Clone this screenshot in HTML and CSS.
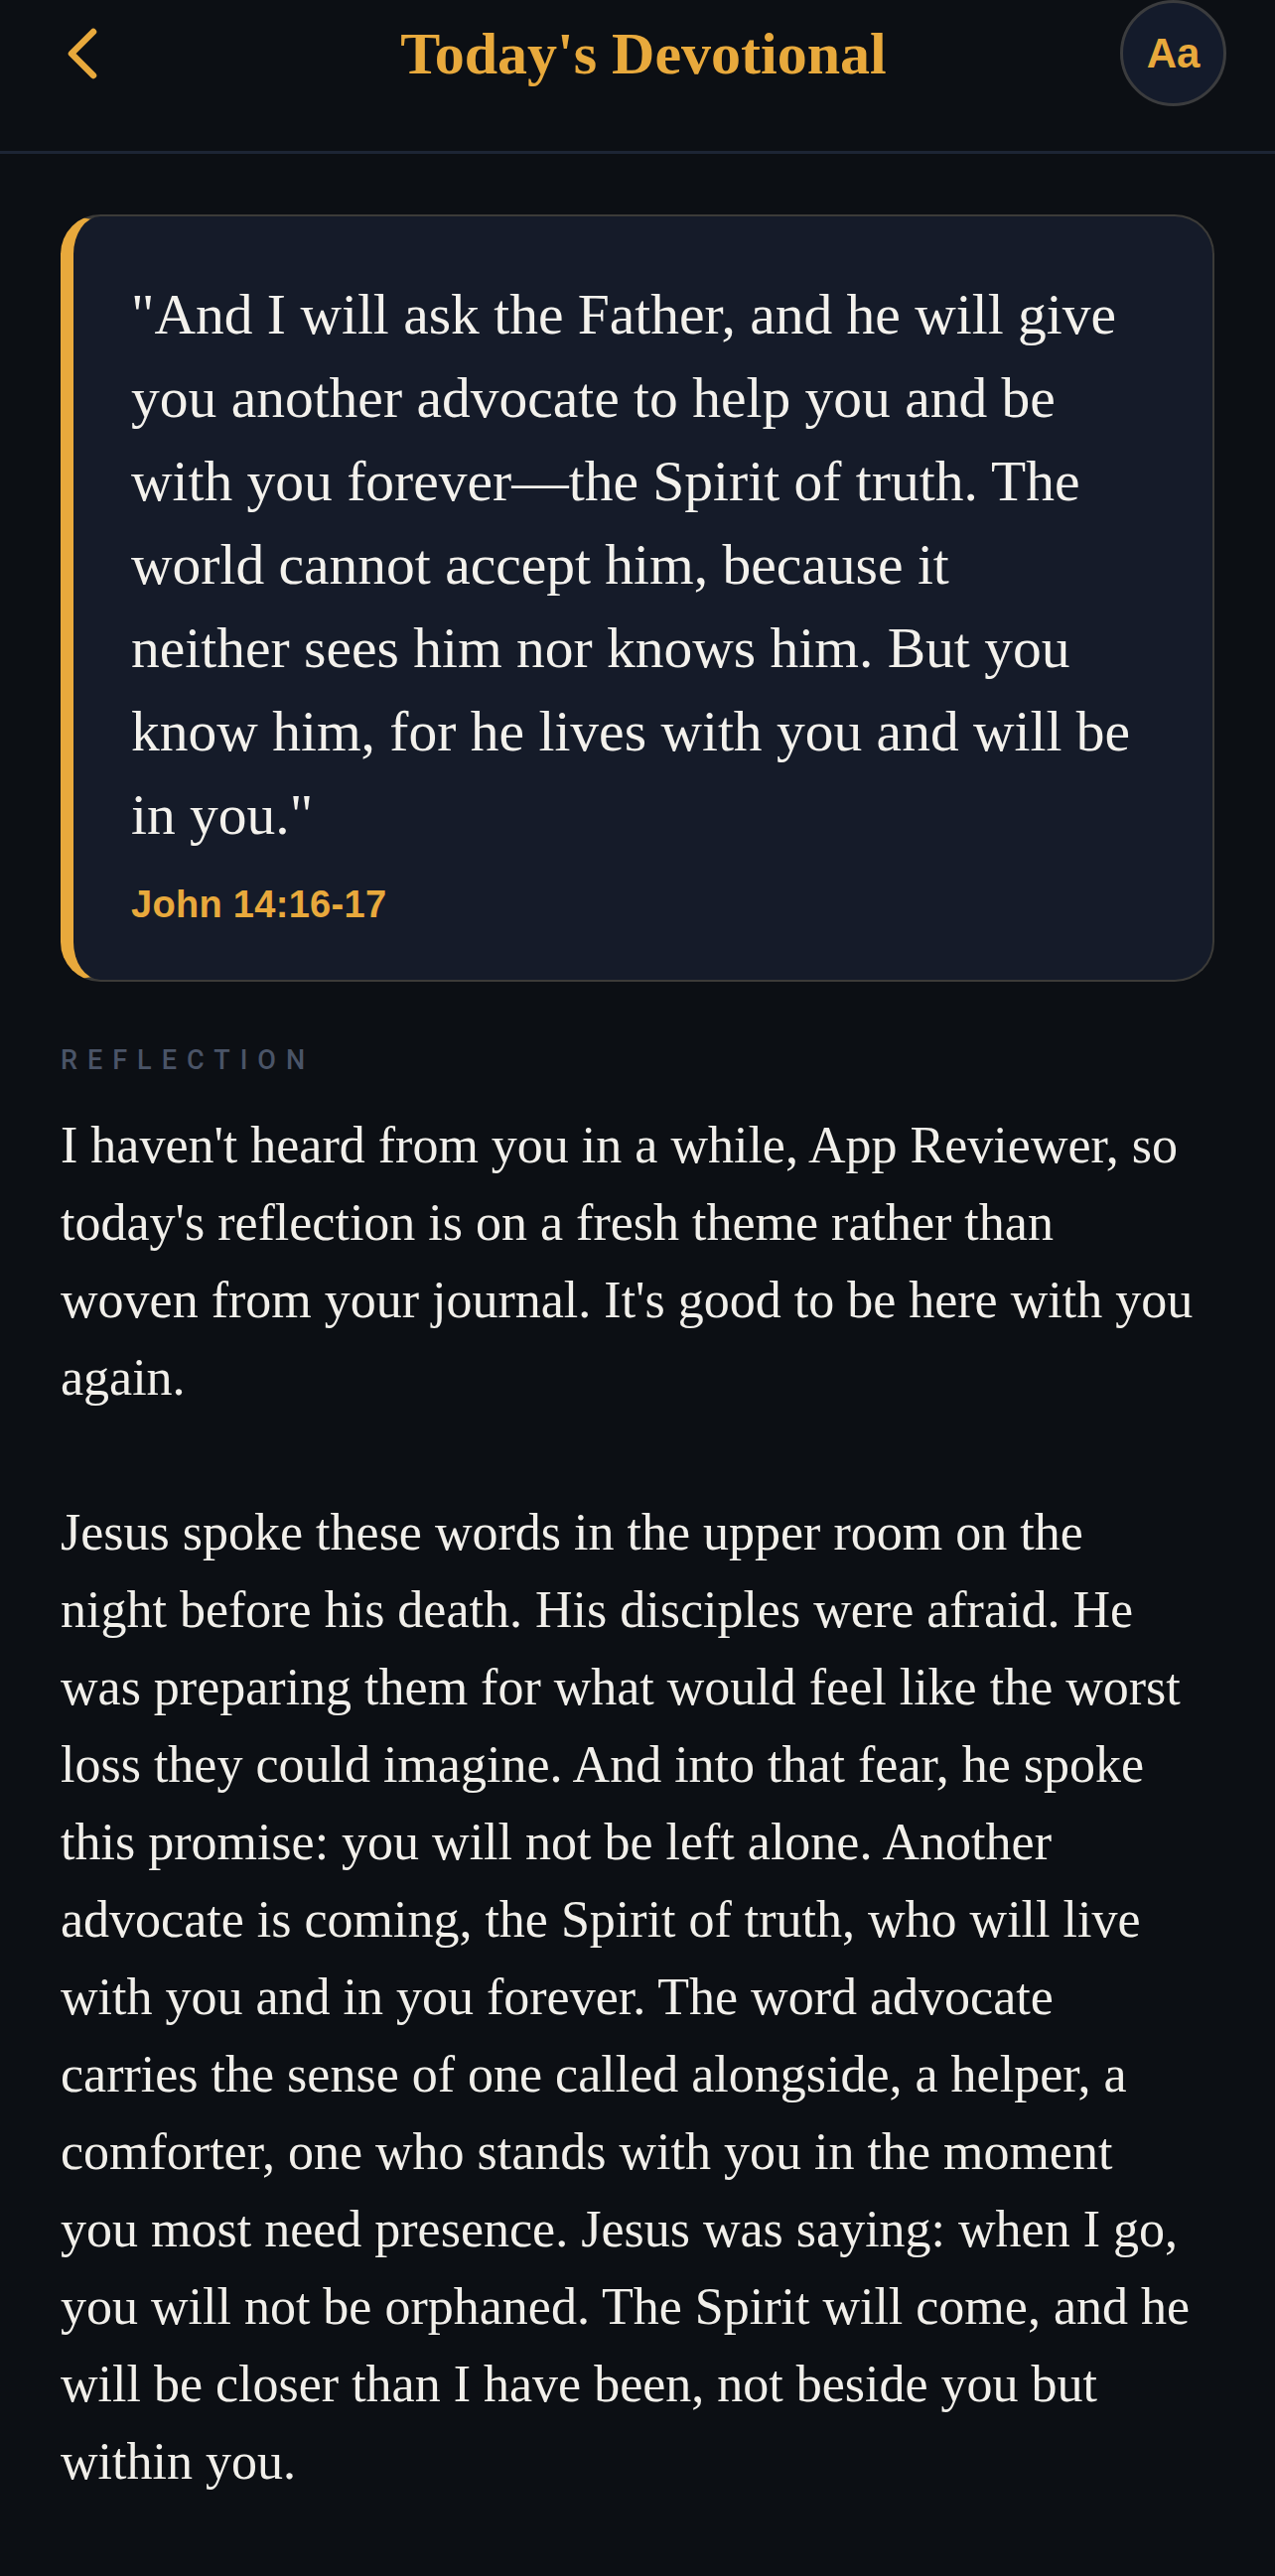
FILE: index.html
```html
<!DOCTYPE html>
<html lang="en">
<head>
<meta charset="utf-8">
<title>Today's Devotional</title>
<link rel="stylesheet" href="styles.css">
</head>
<body>
<div class="screen">
  <header class="topbar">
    <div class="topbar-row">
      <button class="back" aria-label="Back">
        <svg class="back-icon" width="40" height="60" viewBox="0 0 40 60" fill="none">
          <path d="M33 8 L11 30 L33 52" stroke="#e8a93c" stroke-width="6.5" stroke-linecap="round" stroke-linejoin="round"/>
        </svg>
      </button>
      <h1 class="title">Today's Devotional</h1>
      <button class="font-btn" aria-label="Text size">Aa</button>
    </div>
  </header>

  <main class="content">
    <blockquote class="verse-card">
      <p class="verse-text">"And I will ask the Father, and he will give<br>
      you another advocate to help you and be<br>
      with you forever—the Spirit of truth. The<br>
      world cannot accept him, because it<br>
      neither sees him nor knows him. But you<br>
      know him, for he lives with you and will be<br>
      in you."</p>
      <cite class="verse-ref">John 14:16-17</cite>
    </blockquote>

    <section class="reflection">
      <h2 class="section-label">REFLECTION</h2>
      <div class="reflection-body">
        <p>I haven't heard from you in a while, App Reviewer, so<br>
        today's reflection is on a fresh theme rather than<br>
        woven from your journal. It's good to be here with you<br>
        again.</p>
        <p>Jesus spoke these words in the upper room on the<br>
        night before his death. His disciples were afraid. He<br>
        was preparing them for what would feel like the worst<br>
        loss they could imagine. And into that fear, he spoke<br>
        this promise: you will not be left alone. Another<br>
        advocate is coming, the Spirit of truth, who will live<br>
        with you and in you forever. The word advocate<br>
        carries the sense of one called alongside, a helper, a<br>
        comforter, one who stands with you in the moment<br>
        you most need presence. Jesus was saying: when I go,<br>
        you will not be orphaned. The Spirit will come, and he<br>
        will be closer than I have been, not beside you but<br>
        within you.</p>
      </div>
    </section>
  </main>
</div>
</body>
</html>
```

FILE: styles.css
```css
* {
  box-sizing: border-box;
}

html, body {
  margin: 0;
  padding: 0;
  background: #0c0f14;
}

body {
  font-family: "Liberation Serif", "Times New Roman", serif;
  color: #f2f0eb;
}

.screen {
  min-height: 2595px;
  background: #0c0f14;
}

/* Header */
.topbar {
  height: 155px;
  border-bottom: 3px solid #1d2535;
}

.topbar-row {
  height: 102px;
  display: grid;
  grid-template-columns: 1fr auto 1fr;
  align-items: center;
  padding: 0 49px 0 61px;
}

.back {
  justify-self: start;
  background: none;
  border: 0;
  padding: 0;
  margin: 0;
  width: 40px;
  height: 60px;
  display: flex;
}

.back-icon {
  display: block;
}

.title {
  margin: 0;
  font-family: "Liberation Serif", "Times New Roman", serif;
  font-weight: 700;
  font-size: 60px;
  line-height: 1.1;
  color: #e8a93c;
  text-align: center;
  letter-spacing: 0;
}

.font-btn {
  justify-self: end;
  width: 107px;
  height: 107px;
  border-radius: 50%;
  border: 3px solid #3b3c3e;
  background: #141b2b;
  color: #e8a93c;
  font-family: "Liberation Sans", Arial, sans-serif;
  font-weight: 700;
  font-size: 42px;
  line-height: 1;
  padding: 0;
  display: flex;
  align-items: center;
  justify-content: center;
}

/* Content */
.content {
  padding: 61px 61px 60px;
}

.verse-card {
  margin: 0;
  background: #151b29;
  border: 2px solid #3c3b38;
  border-left: 13px solid #e8a93c;
  border-radius: 40px;
  padding: 57px 40px 52px 58px;
}

.verse-text {
  margin: 0;
  font-size: 57.5px;
  line-height: 84px;
  color: #f3f1ec;
}

.verse-ref {
  display: block;
  margin-top: 25px;
  font-style: normal;
  font-family: "Liberation Sans", Arial, sans-serif;
  font-weight: 700;
  font-size: 38px;
  line-height: 47px;
  color: #e8a93c;
  letter-spacing: 0.3px;
}

.reflection {
  margin-top: 63px;
}

.section-label {
  margin: 0;
  font-family: Roboto, "Liberation Sans", Arial, sans-serif;
  font-weight: 500;
  font-size: 27px;
  line-height: 32px;
  letter-spacing: 10px;
  color: #4a5467;
}

.reflection-body {
  margin-top: 31px;
  font-size: 52px;
  line-height: 78px;
  color: #f1efea;
}

.reflection-body p {
  margin: 0 0 78px;
}

.reflection-body p:last-child {
  margin-bottom: 0;
}
```
